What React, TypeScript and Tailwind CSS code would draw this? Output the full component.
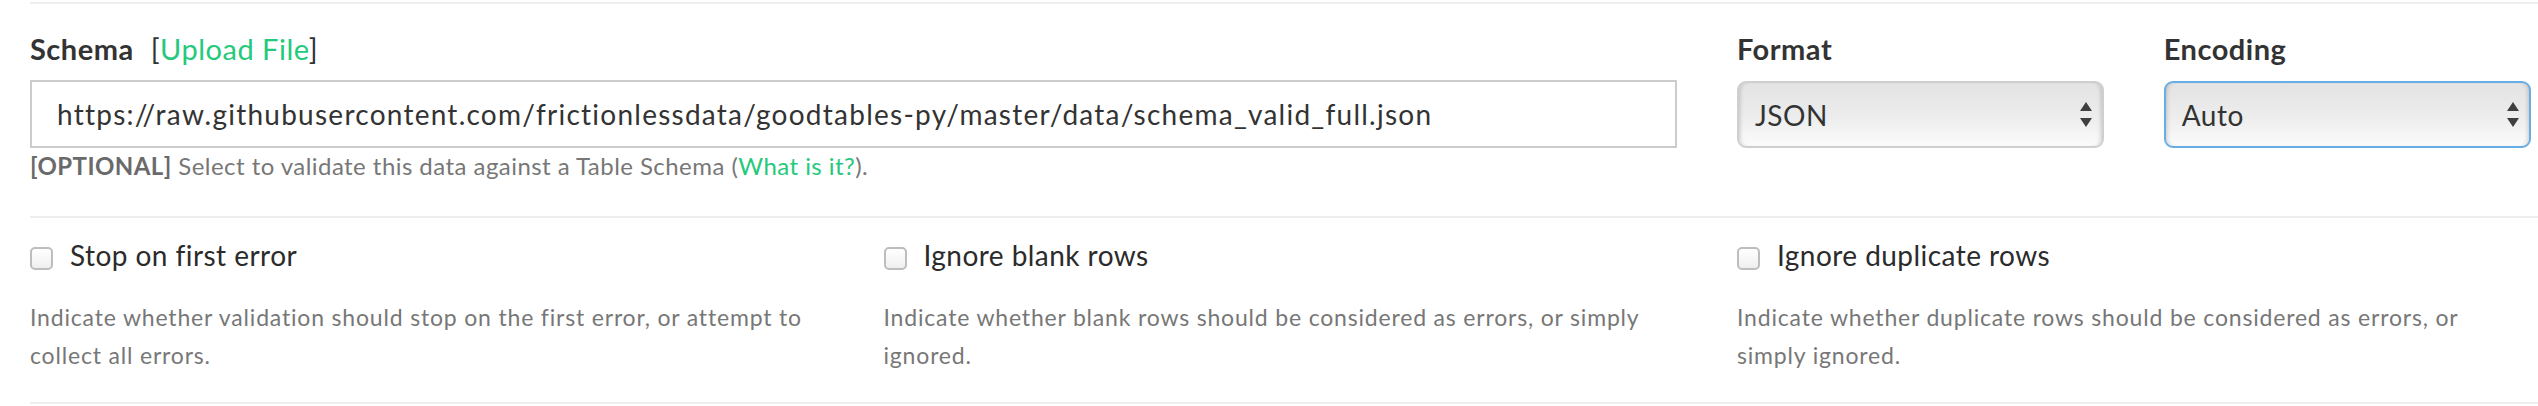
import React from 'react';

const GREEN = 'text-[#25c97c]';

const SelectBox = ({ value, focused }: { value: string; focused?: boolean }) => (
  <div className="relative">
    <select
      defaultValue={value}
      className={`block h-[67px] w-full appearance-none rounded-[9px] border-2 bg-gradient-to-b from-[#e3e3e3] via-[#ececec] to-[#fbfbfb] pl-[16px] text-[28px] tracking-[0.5px] text-[#333] shadow-[inset_4px_0_4px_-3px_rgba(0,0,0,0.18),inset_-4px_0_4px_-3px_rgba(0,0,0,0.18)] outline-none ${
        focused ? 'border-[#68aee6]' : 'border-[#cfcfcf]'
      }`}
    >
      <option>{value}</option>
    </select>
    <svg
      className="pointer-events-none absolute right-[12px] top-[21px]"
      width="12"
      height="25"
      viewBox="0 0 12 25"
    >
      <path d="M6 0 L12 9 L0 9 Z" fill="#3f3f3f" />
      <path d="M0 16 L12 16 L6 25 Z" fill="#3f3f3f" />
    </svg>
  </div>
);

const Option = ({ title, text }: { title: string; text: string }) => (
  <div>
    <label className="flex items-start gap-[17px]">
      <span className="mt-[8px] h-[23px] w-[23px] rounded-[5px] border-2 border-[#bdbdbd] bg-gradient-to-b from-white to-[#efefef]" />
      <span className="text-[28px] leading-[32px] tracking-[0.45px] text-[#2b2b2b]">{title}</span>
    </label>
    <p className="mt-[27px] text-[23px] leading-[38px] tracking-[0.82px] text-[#777]">{text}</p>
  </div>
);

const App = () => {
  const options = [
    {
      id: 1,
      title: 'Stop on first error',
      text: 'Indicate whether validation should stop on the first error, or attempt to collect all errors.',
    },
    {
      id: 2,
      title: 'Ignore blank rows',
      text: 'Indicate whether blank rows should be considered as errors, or simply ignored.',
    },
    {
      id: 3,
      title: 'Ignore duplicate rows',
      text: 'Indicate whether duplicate rows should be considered as errors, or simply ignored.',
    },
  ];

  return (
    <div className="h-[406px] w-full overflow-hidden bg-white font-['Lato',sans-serif]">
      <div className="w-[2600px] pl-[30px]">
        <div className="mt-[2px] h-[2px] bg-[#eeeeee]" />

        {/* Schema / Format / Encoding */}
        <div className="grid grid-cols-[repeat(3,793.5px)] gap-x-[60px] pt-[25px]">
          <div className="col-span-2">
            <div className="text-[29px] leading-[40px] tracking-[0.5px] text-[#333]">
              <span className="font-bold">Schema</span>
              <span className="ml-[17px]">
                [<a className={GREEN}>Upload File</a>]
              </span>
            </div>
            <input
              readOnly
              value="https://raw.githubusercontent.com/frictionlessdata/goodtables-py/master/data/schema_valid_full.json"
              className="mt-[11px] block h-[68px] w-full border-2 border-[#cccccc] pl-[25px] text-[28px] tracking-[1.25px] text-[#333] outline-none"
            />
            <p className="mt-[1px] text-[24px] leading-[34px] tracking-[0.45px] text-[#777]">
              <span className="font-bold text-[#6a6a6a]">[OPTIONAL]</span> Select to validate this data against a
              Table Schema (<a className={GREEN}>What is it?</a>).
            </p>
          </div>

          <div className="grid grid-cols-2 gap-x-[60px]">
            <div>
              <div className="text-[29px] font-bold leading-[40px] tracking-[0.5px] text-[#333]">Format</div>
              <div className="mt-[12px]">
                <SelectBox value="JSON" />
              </div>
            </div>
            <div>
              <div className="text-[29px] font-bold leading-[40px] tracking-[0.5px] text-[#333]">Encoding</div>
              <div className="mt-[12px]">
                <SelectBox value="Auto" focused />
              </div>
            </div>
          </div>
        </div>

        <div className="mt-[33px] h-[2px] bg-[#eeeeee]" />

        {/* Options */}
        <div className="grid grid-cols-[repeat(3,793.5px)] gap-x-[60px] pt-[21px] pb-[28px]">
          {options.map((opt) => (
            <Option key={opt.id} title={opt.title} text={opt.text} />
          ))}
        </div>

        <div className="h-[2px] bg-[#eeeeee]" />
      </div>
    </div>
  );
};

export default App;
